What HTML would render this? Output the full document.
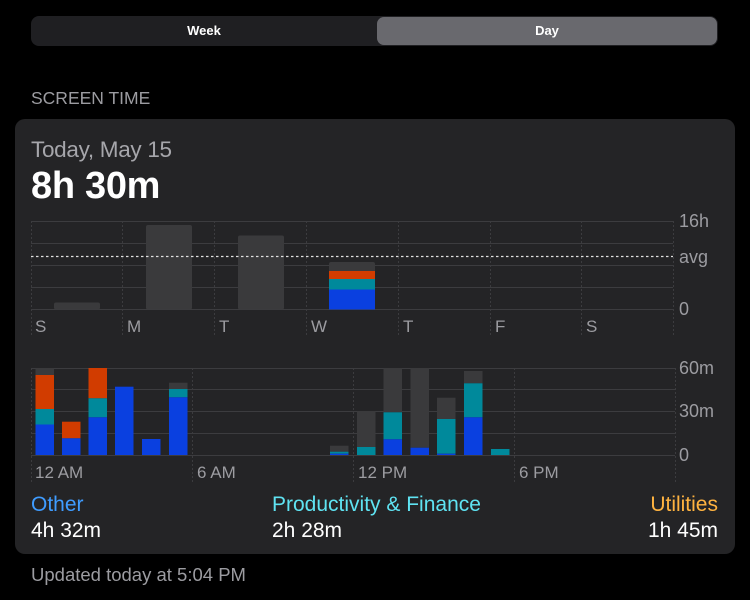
<!DOCTYPE html>
<html><head><meta charset="utf-8"><style>
html,body{margin:0;padding:0;background:#000;width:750px;height:600px;overflow:hidden;font-family:"Liberation Sans",sans-serif;}
.a{position:absolute;white-space:nowrap;}
</style></head><body>
<div class="a" style="left:31px;top:16px;width:687px;height:30px;background:#1f1f22;border-radius:8px;"></div>
<div class="a" style="left:377px;top:17px;width:340px;height:28px;background:#69696e;border-radius:7px;"></div>
<div class="a" style="left:31px;top:16px;width:346px;line-height:30px;text-align:center;color:#fff;font-size:13px;font-weight:bold;">Week</div>
<div class="a" style="left:377px;top:16px;width:340px;line-height:30px;text-align:center;color:#fff;font-size:13px;font-weight:bold;">Day</div>
<div class="a" style="left:31px;top:88px;color:#9c9ca1;font-size:17.5px;">SCREEN TIME</div>
<div class="a" style="left:15px;top:119px;width:720px;height:435px;background:#242426;border-radius:10px;"></div>
<div class="a" style="left:31px;top:137px;color:#a6a6ab;font-size:22.5px;letter-spacing:-0.3px;">Today, May 15</div>
<div class="a" style="left:31px;top:165px;color:#fff;font-size:38px;font-weight:bold;letter-spacing:-0.3px;">8h 30m</div>
<svg class="a" style="left:0;top:0" width="750" height="600" font-family="Liberation Sans" fill="#9c9ca1">
<g stroke="#3c3c3f" stroke-width="1">
<line x1="31" y1="221.5" x2="673" y2="221.5"/><line x1="31" y1="243.5" x2="673" y2="243.5"/><line x1="31" y1="265.5" x2="673" y2="265.5"/><line x1="31" y1="287.5" x2="673" y2="287.5"/><line x1="31" y1="309.5" x2="673" y2="309.5"/>
</g>
<g stroke="#3c3c3f" stroke-dasharray="2,2">
<line x1="31.5" y1="221" x2="31.5" y2="335"/><line x1="122.5" y1="221" x2="122.5" y2="335"/><line x1="214.5" y1="221" x2="214.5" y2="335"/><line x1="306.5" y1="221" x2="306.5" y2="335"/><line x1="398.5" y1="221" x2="398.5" y2="335"/><line x1="490.5" y1="221" x2="490.5" y2="335"/><line x1="581.5" y1="221" x2="581.5" y2="335"/><line x1="673.5" y1="221" x2="673.5" y2="335"/>
</g>
<g fill="#3a3a3c">
<rect x="54" y="302.5" width="46" height="7" rx="2"/><rect x="146" y="225" width="46" height="84.5" rx="2"/><rect x="238" y="235.5" width="46" height="74" rx="2"/><rect x="329" y="262" width="46" height="20" rx="2"/>
</g>
<rect x="329" y="271" width="46" height="8" fill="#d13c00"/><rect x="329" y="279" width="46" height="10.5" fill="#00899b"/><rect x="329" y="289.5" width="46" height="20" fill="#0a40e0"/>
<line x1="31" y1="256.5" x2="673" y2="256.5" stroke="#e0e0e0" stroke-width="1.3" stroke-dasharray="2.5,2.5"/>
<g font-size="18"><text x="679" y="227">16h</text><text x="679" y="263">avg</text><text x="679" y="315">0</text></g>
<g font-size="17"><text x="35" y="332">S</text><text x="127" y="332">M</text><text x="219" y="332">T</text><text x="311" y="332">W</text><text x="403" y="332">T</text><text x="495" y="332">F</text><text x="586" y="332">S</text></g>
<g stroke="#3c3c3f">
<line x1="31" y1="368.5" x2="675" y2="368.5"/><line x1="31" y1="389.5" x2="675" y2="389.5"/><line x1="31" y1="411.5" x2="675" y2="411.5"/><line x1="31" y1="433.5" x2="675" y2="433.5"/><line x1="31" y1="455.5" x2="675" y2="455.5"/>
</g>
<g stroke="#3c3c3f" stroke-dasharray="2,2">
<line x1="31.5" y1="368" x2="31.5" y2="482"/><line x1="192.5" y1="368" x2="192.5" y2="482"/><line x1="353.5" y1="368" x2="353.5" y2="482"/><line x1="514.5" y1="368" x2="514.5" y2="482"/><line x1="675.5" y1="368" x2="675.5" y2="482"/>
</g>
<g>
<rect x="35.5" y="368" width="18.5" height="7" fill="#3a3a3c"/><rect x="35.5" y="375" width="18.5" height="34" fill="#d13c00"/><rect x="35.5" y="409" width="18.5" height="15.5" fill="#00899b"/><rect x="35.5" y="424.5" width="18.5" height="30.5" fill="#0a40e0"/>
<rect x="62" y="421.7" width="18.5" height="16.6" fill="#d13c00"/><rect x="62" y="438.3" width="18.5" height="16.7" fill="#0a40e0"/>
<rect x="88.5" y="368" width="18.5" height="30.3" fill="#d13c00"/><rect x="88.5" y="398.3" width="18.5" height="19" fill="#00899b"/><rect x="88.5" y="417.3" width="18.5" height="37.7" fill="#0a40e0"/>
<rect x="115" y="386.7" width="18.5" height="68.3" fill="#0a40e0"/>
<rect x="142" y="439" width="18.5" height="16" fill="#0a40e0"/>
<rect x="169" y="382.7" width="18.5" height="6.3" fill="#3a3a3c"/><rect x="169" y="389" width="18.5" height="8.3" fill="#00899b"/><rect x="169" y="397.3" width="18.5" height="57.7" fill="#0a40e0"/>
<rect x="330" y="445.7" width="18.5" height="6" fill="#3a3a3c"/><rect x="330" y="451.7" width="18.5" height="2" fill="#00899b"/><rect x="330" y="453.7" width="18.5" height="1.3" fill="#0a40e0"/>
<rect x="357" y="411" width="18.5" height="36" fill="#3a3a3c"/><rect x="357" y="447" width="18.5" height="8" fill="#00899b"/>
<rect x="383.5" y="368" width="18.5" height="44.3" fill="#3a3a3c"/><rect x="383.5" y="412.3" width="18.5" height="27" fill="#00899b"/><rect x="383.5" y="439.3" width="18.5" height="15.7" fill="#0a40e0"/>
<rect x="410.5" y="368" width="18.5" height="79.7" fill="#3a3a3c"/><rect x="410.5" y="447.7" width="18.5" height="7.3" fill="#0a40e0"/>
<rect x="437" y="397.7" width="18.5" height="21.3" fill="#3a3a3c"/><rect x="437" y="419" width="18.5" height="34.7" fill="#00899b"/><rect x="437" y="453.7" width="18.5" height="1.3" fill="#0a40e0"/>
<rect x="464" y="371" width="18.5" height="12.3" fill="#3a3a3c"/><rect x="464" y="383.3" width="18.5" height="34" fill="#00899b"/><rect x="464" y="417.3" width="18.5" height="37.7" fill="#0a40e0"/>
<rect x="491" y="449" width="18.5" height="6" fill="#00899b"/>
</g>
<g font-size="18"><text x="679" y="374">60m</text><text x="679" y="417">30m</text><text x="679" y="461">0</text></g>
<g font-size="17"><text x="35" y="478">12 AM</text><text x="197" y="478">6 AM</text><text x="358" y="478">12 PM</text><text x="519" y="478">6 PM</text></g>
</svg>
<div class="a" style="left:31px;top:493px;color:#3f9cff;font-size:21px;">Other</div>
<div class="a" style="left:272px;top:493px;color:#5fe3f2;font-size:21px;">Productivity &amp; Finance</div>
<div class="a" style="right:32px;top:493px;color:#ffb340;font-size:21px;">Utilities</div>
<div class="a" style="left:31px;top:519px;color:#fff;font-size:21px;">4h 32m</div>
<div class="a" style="left:272px;top:519px;color:#fff;font-size:21px;">2h 28m</div>
<div class="a" style="right:32px;top:519px;color:#fff;font-size:21px;">1h 45m</div>
<div class="a" style="left:31px;top:564px;color:#9c9ca1;font-size:18.5px;">Updated today at 5:04 PM</div>
</body></html>
